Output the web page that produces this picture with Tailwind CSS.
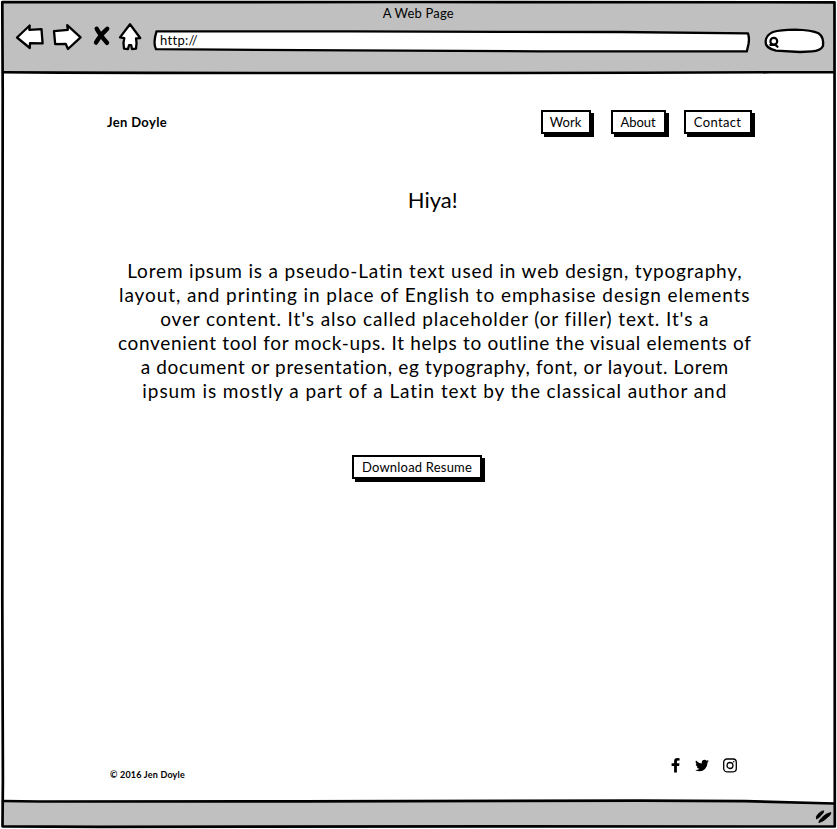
<!DOCTYPE html>
<html lang="en">
<head>
<meta charset="utf-8">
<title>A Web Page</title>
<script src="https://cdn.jsdelivr.net/npm/@tailwindcss/browser@4"></script>
</head>
<body class="bg-white">
<div class="grid w-[837px] h-[829px] overflow-hidden font-['Lato',sans-serif] text-black">
  <!-- Browser chrome: frame, toolbar icons, address and search fields -->
  <svg class="[grid-area:1/1]" width="837" height="829" viewBox="0 0 837 829" fill="none" stroke="#000" stroke-linejoin="round" stroke-linecap="round">
    <path d="M3 2.5H834.5V72.5H3Z" fill="#c0c0c0" stroke="none"/>
    <path d="M3 801.5L300 801.2L640 800.5L745 801L834.5 803.5V826.5H3Z" fill="#c0c0c0" stroke="none"/>
    <path stroke-width="2.7" d="M2.3 2.2L420 2L834.5 2.3L834.7 400L834.8 826.5L500 826.4L100 826.8L2.5 826.3L2.9 780L2.3 600L2.5 300L2.7 90L2.3 2.2Z"/>
    <path stroke-width="2.6" d="M3 72.2L60 72.6L150 72.9L460 73L640 72.8L770 72.3L834 72.3"/>
    <path stroke-width="2.7" d="M3 801L40 801.5L300 801.3L640 800.7L745 801.2L834 803.5"/>
    <g fill="#fff" stroke-width="2.3">
      <path d="M17 37.5L29.7 25.5L29.4 29.8L41.5 29.2L42.6 43.4L30 43.2L29.8 48L17 37.5Z"/>
      <path d="M54 31.2L67.8 29.8L67.2 25.2L80.6 37.3L68 49L65.8 44L55.2 44.2L54 31.2Z"/>
      <path d="M130 24.3L120 37.4L124.3 38.2Q122.8 43 124 48.6L128 49L129 45.2L131.2 45.2L132 49L136 48.6Q137.2 43 136 38.4L140.2 38L130 24.3Z"/>
      <path d="M156.5 31.4L350 31.4L500 31.8L620 32L748 33.4Q749.6 38 748.5 44L746.8 51.4L540 51.3L350 50.4L156 49.2Q152.8 43 156.5 31.4Z"/>
      <path d="M773 32Q780 29.7 795 29.6Q812 30 818.5 33.3Q824 37 823 46Q820.5 51 812 51.3L800 52L776 50.7Q765 48 765.6 41.5Q766 35 773 32Z"/>
      <circle cx="773.8" cy="41.3" r="3.4" stroke-width="2.2"/>
      <path d="M770.3 44.8L775.5 44.9L777.5 46.8" stroke-width="2.2" fill="none"/>
    </g>
    <path stroke-width="4.4" d="M96.7 28.8Q100 35 107 42.8M107.2 28.8Q100 35 96 42.6"/>
    <path fill="#000" stroke-width=".6" d="M816.5 818.8Q815 817 818.5 813.5Q822 810.4 823.8 810.8Q824.3 812.5 821 815.5Q818 819 816.5 818.8ZM819 822.4Q818 821 822 817.4Q826 813 831 812.4Q831.5 814.5 827.5 817.5Q822 822.5 819 822.4Z"/>
  </svg>
  <div class="[grid-area:1/1] z-10 flex flex-col">
    <header class="h-[74px] flex flex-col">
      <div class="h-[27px] pr-[2px] text-center text-[13px] leading-[27px] tracking-[0.2px]">A Web Page</div>
      <div class="flex h-[28px] pl-[160px] text-[13px] leading-[27px] tracking-[0.3px]">http://</div>
    </header>
    <main class="h-[726px] flex flex-col pl-[107px] pr-[87px]">
      <nav class="mt-[36px] flex justify-between text-[13px]">
        <div class="font-bold leading-[25px] tracking-[0.35px]">Jen Doyle</div>
        <div class="flex gap-[18px]">
          <a class="h-[24px] w-[50px] mr-[2px] border-2 border-black bg-white shadow-[3px_3px_0_0_#000] leading-[21px] text-center">Work</a>
          <a class="h-[24px] w-[55px] border-2 border-black bg-white shadow-[3px_3px_0_0_#000] leading-[21px] text-center">About</a>
          <a class="h-[24px] w-[68px] border-2 border-black bg-white shadow-[3px_3px_0_0_#000] leading-[21px] text-center tracking-[0.35px]">Contact</a>
        </div>
      </nav>
      <h1 class="mt-[48px] pl-[7px] text-[22px] leading-[34px] text-center">Hiya!</h1>
      <div class="mt-[42px] h-[144px] pl-[11px] flex flex-col items-center text-[19px] leading-[24px] whitespace-nowrap">
        <div class="tracking-[0.82px]">Lorem ipsum is a pseudo-Latin text used in web design, typography,</div>
        <div class="tracking-[0.91px]">layout, and printing in place of English to emphasise design elements</div>
        <div class="tracking-[0.89px]">over content. It's also called placeholder (or filler) text. It's a</div>
        <div class="tracking-[0.66px]">convenient tool for mock-ups. It helps to outline the visual elements of</div>
        <div class="tracking-[0.65px]">a document or presentation, eg typography, font, or layout. Lorem</div>
        <div class="tracking-[0.92px]">ipsum is mostly a part of a Latin text by the classical author and</div>
      </div>
      <a class="mt-[52px] ml-[245px] h-[24px] w-[130px] border-2 border-black bg-white shadow-[3px_3px_0_0_#000] text-[13px] leading-[21px] text-center tracking-[0.2px]">Download Resume</a>
      <footer class="mt-auto mb-[19px] flex justify-between pl-[3px] pr-[14px]">
        <div class="mt-[13px] text-[9px] leading-[12px] font-bold tracking-[0.2px]">© 2016 Jen Doyle</div>
        <div class="mt-[2px] -mb-px mr-[-1px] pr-[2px] flex">
          <svg class="mr-[15px]" width="9" height="15" viewBox="0 0 9 15"><path d="M8.6 .2V2.5H7.2Q5.9 2.5 5.9 3.7V5.3H8.5L8.1 7.9H5.9V14.5H3.1V7.9H.6V5.3H3.1V3.3Q3.1 .1 6.4 .1Q7.8 .1 8.6 .2Z"/></svg>
          <svg class="mr-[14px]" width="14" height="15" viewBox="0 0 14 15"><path d="M13.8 3.3Q13.2 4.2 12.4 4.8Q12.6 8.4 10 11Q7.8 13.2 4.6 13.2Q2.1 13.2 .2 12Q2.5 12.2 4.3 10.8Q2.4 10.6 1.7 8.8H2.9Q.7 8.2 .7 6L1.9 6.3Q-.1 4.6 1 2.5Q3.4 5.3 6.9 5.4Q6.4 3.5 7.8 2.3Q9.8 .9 11.7 2.7L13.5 2Q13.2 3 12.3 3.6Z"/></svg>
          <svg width="14" height="15" viewBox="0 0 14 15" fill="none" stroke="#000" stroke-width="1.3"><rect x=".7" y="1" width="12.6" height="12.8" rx="3.2"/><circle cx="7" cy="7.5" r="3"/><circle cx="10.7" cy="3.8" r=".8" fill="#000" stroke="none"/></svg>
        </div>
      </footer>
    </main>
  </div>
</div>
</body>
</html>
